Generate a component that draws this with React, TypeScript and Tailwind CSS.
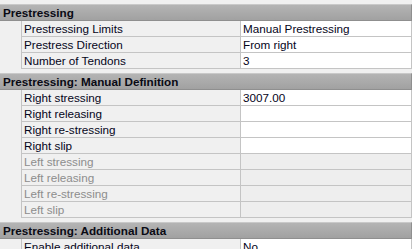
type Row = { label: string; value?: string; disabled?: boolean };
type Section = { title: string; rows: Row[] };

const sections: Section[] = [
  {
    title: "Prestressing",
    rows: [
      { label: "Prestressing Limits", value: "Manual Prestressing" },
      { label: "Prestress Direction", value: "From right" },
      { label: "Number of Tendons", value: "3" },
    ],
  },
  {
    title: "Prestressing: Manual Definition",
    rows: [
      { label: "Right stressing", value: "3007.00" },
      { label: "Right releasing" },
      { label: "Right re-stressing" },
      { label: "Right slip" },
      { label: "Left stressing", disabled: true },
      { label: "Left releasing", disabled: true },
      { label: "Left re-stressing", disabled: true },
      { label: "Left slip", disabled: true },
    ],
  },
  {
    title: "Prestressing: Additional Data",
    rows: [{ label: "Enable additional data", value: "No" }],
  },
];

function PropertyRow({ row }: { row: Row }) {
  return (
    <div className="flex h-[16px]">
      <div className="w-[21px] shrink-0" />
      <div
        className={`w-[219px] shrink-0 border-l border-b border-[#c4c4c4] pl-[2px] leading-[15px] ${
          row.disabled ? "text-[#8d8d8d]" : "text-[#05051a]"
        }`}
      >
        {row.label}
      </div>
      <div
        className={`w-[172px] shrink-0 border-l border-r border-b border-[#c4c4c4] pl-[2px] leading-[15px] text-[#05051a] ${
          row.disabled ? "bg-[#eeeeee]" : "bg-white"
        }`}
      >
        {row.value}
      </div>
    </div>
  );
}

function SectionBlock({ section }: { section: Section }) {
  return (
    <div className="flex flex-col pt-[4px]">
      <div className="h-[17px] border-t border-[#c9c9c9] border-b border-b-[#8f8f8f] border-r border-r-[#8f8f8f] bg-gradient-to-b from-[#b4b4b4] to-[#a1a1a1] pl-[3px] font-bold leading-[15px] text-[#0a0a14]">
        {section.title}
      </div>
      {section.rows.map((row) => (
        <PropertyRow key={row.label} row={row} />
      ))}
    </div>
  );
}

export default function App() {
  return (
    <div className="h-[249px] w-[412px] overflow-hidden bg-[#f0f0f0] font-['Liberation_Sans',Arial,sans-serif] text-[11.7px]">
      {sections.map((section) => (
        <SectionBlock key={section.title} section={section} />
      ))}
    </div>
  );
}
